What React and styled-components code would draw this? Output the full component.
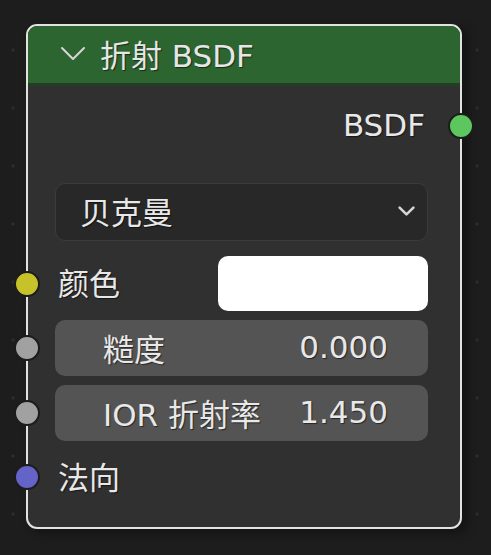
import React from "react"
import styled, { createGlobalStyle } from "styled-components"

const GlobalStyle = createGlobalStyle`
  *, *::before, *::after {
    box-sizing: border-box;
  }
  html, body {
    margin: 0;
    padding: 0;
    background-color: #1d1d1d;
    background-image: radial-gradient(circle, #2c2c2c 1.4px, transparent 1.8px);
    background-size: 58px 58px;
    background-position: -16px 21px;
    min-height: 555px;
    font-family: "DejaVu Sans", "Noto Sans CJK SC", sans-serif;
  }
`

const Canvas = styled.div`
  padding: 24px 0 0 26px;
`

const Node = styled.div`
  width: 436px;
  height: 505px;
  border: 2px solid #e2e2e2;
  border-radius: 11px;
  background: #303030;
  box-shadow: 6px 4px 10px rgba(0, 0, 0, 0.35);
  display: flex;
  flex-direction: column;
`

const Header = styled.div`
  height: 60px;
  flex-shrink: 0;
  background: #2d6530;
  border-radius: 9px 9px 0 0;
  border-bottom: 3px solid #243d25;
  display: flex;
  align-items: center;
  padding: 0 0 3px 32px;
  gap: 14px;
  color: #e6e6e6;
  font-size: 31px;
  text-shadow: 1px 1px 1px rgba(0, 0, 0, 0.55);
`

const Body = styled.div`
  display: flex;
  flex-direction: column;
  padding: 11px 32px 0 27px;
`

const Row = styled.div`
  position: relative;
  height: ${p => p.$h || 56}px;
  margin-top: ${p => p.$mt || 0}px;
  display: flex;
  align-items: center;
  justify-content: ${p => (p.$right ? "flex-end" : "space-between")};
  color: #e8e8e8;
  font-size: 31px;
  text-shadow: 1px 1px 1px rgba(0, 0, 0, 0.55);
`

const Label = styled.span`
  padding: ${p => p.$pad || "0 0 4px 3px"};
  white-space: nowrap;
`

const Socket = styled.span`
  position: absolute;
  top: 50%;
  ${p => (p.$out ? "right: -46px;" : "left: -41px;")}
  width: 26px;
  height: 26px;
  margin-top: -13px;
  border-radius: 50%;
  background: ${p => p.$color};
  border: 2px solid #1c1c1c;
`

const Dropdown = styled.div`
  height: 58px;
  margin-top: 28px;
  border: 1px solid #3b3b3b;
  border-radius: 10px;
  background: #282828;
  display: flex;
  align-items: center;
  justify-content: space-between;
  padding: 0 11px 3px 24px;
  color: #e8e8e8;
  font-size: 31px;
  text-shadow: 1px 1px 1px rgba(0, 0, 0, 0.55);
`

const Swatch = styled.div`
  width: 210px;
  height: 55px;
  border-radius: 10px;
  background: #ffffff;
`

const Field = styled.div`
  flex: 1;
  align-self: stretch;
  border-radius: 10px;
  background: #545454;
  display: flex;
  align-items: center;
  justify-content: space-between;
  padding: 0 40px 2px 48px;
`

const Chevron = ({ w, h, sw }) => (
  <svg width={w} height={h} viewBox={`0 0 ${w} ${h}`}>
    <polyline
      points={`${sw},${sw} ${w / 2},${h - sw} ${w - sw},${sw}`}
      fill="none"
      stroke="#d6d6d6"
      strokeWidth={sw}
      strokeLinecap="round"
      strokeLinejoin="round"
    />
  </svg>
)

const App = () => {
  return (
    <Canvas>
      <GlobalStyle />
      <Node>
        <Header>
          <Chevron w={26} h={15} sw={2} />
          <span>折射 BSDF</span>
        </Header>
        <Body>
          <Row $h={58} $right>
            <Label $pad="0 3px 2px 0">BSDF</Label>
            <Socket $out $color="#5dc75f" />
          </Row>
          <Dropdown>
            <span>贝克曼</span>
            <Chevron w={19} h={12} sw={2.6} />
          </Dropdown>
          <Row $h={55} $mt={15}>
            <Label>颜色</Label>
            <Swatch />
            <Socket $color="#c7c22a" />
          </Row>
          <Row $mt={9}>
            <Field>
              <span>糙度</span>
              <span>0.000</span>
            </Field>
            <Socket $color="#a1a1a1" />
          </Row>
          <Row $mt={9}>
            <Field>
              <span>IOR 折射率</span>
              <span>1.450</span>
            </Field>
            <Socket $color="#a1a1a1" />
          </Row>
          <Row $mt={8}>
            <Label>法向</Label>
            <Socket $color="#6363c8" />
          </Row>
        </Body>
      </Node>
    </Canvas>
  )
}

export default App
